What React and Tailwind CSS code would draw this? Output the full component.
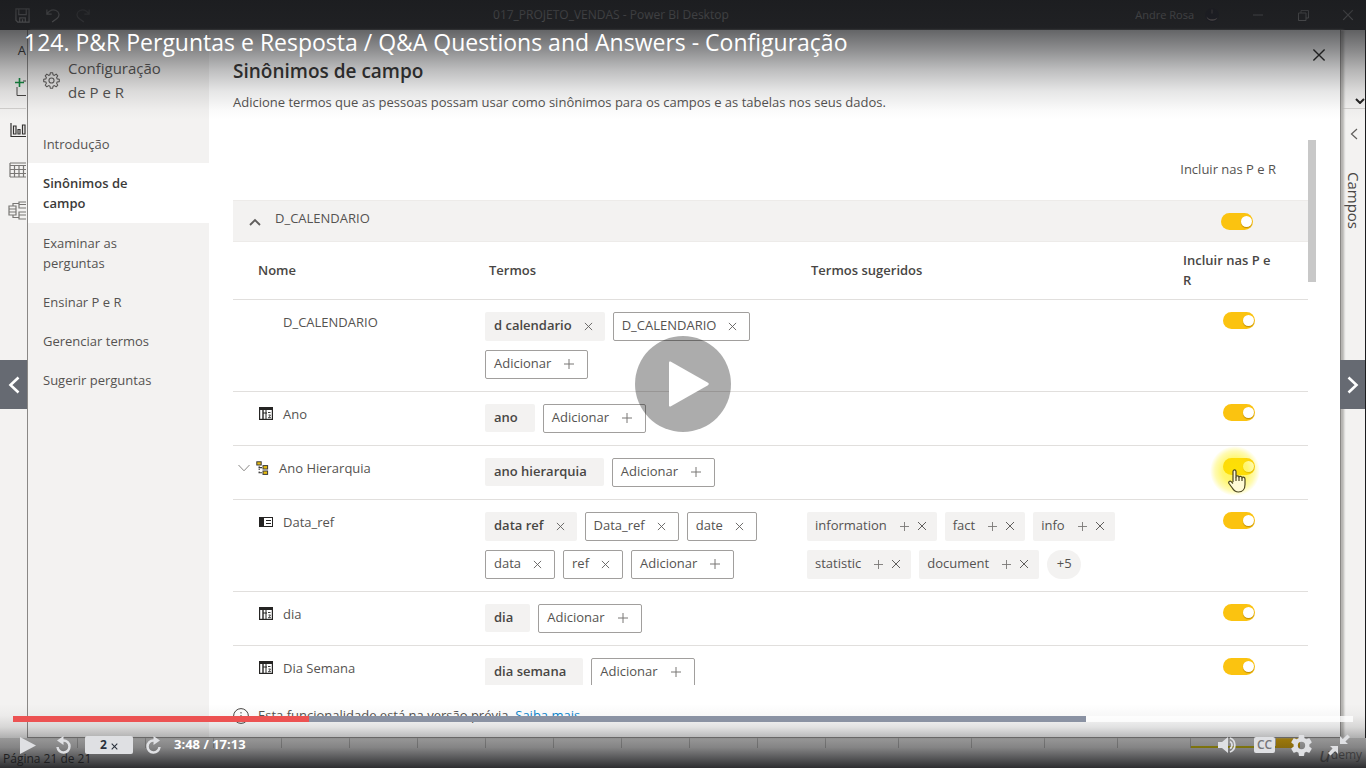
import React, { useState } from "react";

function Cross({ className = "" }) {
  return (
    <svg viewBox="0 0 10 10" className={className} fill="none" stroke="currentColor" strokeWidth="1" aria-hidden="true">
      <path d="M1 1l8 8M9 1l-8 8" />
    </svg>
  );
}

function Plus({ className = "" }) {
  return (
    <svg viewBox="0 0 10 10" className={className} fill="none" stroke="currentColor" strokeWidth="1" aria-hidden="true">
      <path d="M5 0v10M0 5h10" />
    </svg>
  );
}

function GearOutline() {
  return (
    <svg viewBox="0 0 24 24" className="w-[17px] h-[17px] shrink-0" fill="none" stroke="#605e5c" strokeWidth="1.5" strokeLinejoin="round" aria-hidden="true">
      <circle cx="12" cy="12" r="3.6" />
      <path d="M10.4 1h3.2l.6 3 1.8.8L18.600 3l2.300 2.300-1.700 2.600.7 1.800 3.100.6v3.300l-3.100.6-.7 1.800 1.700 2.600-2.300 2.300-2.600-1.700-1.800.8-.6 3h-3.200l-.6-3-1.800-.8L5.400 20.900l-2.300-2.300L4.800 16l-.7-1.800-3.100-.6v-3.300l3.100-.6.7-1.800-1.700-2.600L5.400 3 8 4.800 9.800 4z" />
    </svg>
  );
}

function TableIcon() {
  return (
    <svg viewBox="0 0 14 13" className="w-[14px] h-[13px] shrink-0" fill="none" stroke="#252423" aria-hidden="true">
      <rect x=".6" y=".6" width="12.800" height="11.800" strokeWidth="1.200" />
      <path d="M0 1.500h14" strokeWidth="3" />
      <path d="M4 3v9.500" strokeWidth="1.400" />
      <path d="M7 3v9.500M4 6h4" strokeWidth="1" />
      <path d="M9 5.500h2.500M9.500 8h2l-1 1.300 1 1.400H9" strokeWidth=".9" />
    </svg>
  );
}

function HierarchyIcon() {
  return (
    <svg viewBox="0 0 13 14" className="w-[13px] h-[14px] shrink-0" aria-hidden="true">
      <g fill="#e8bd10" stroke="#3b3a39" strokeWidth="1">
        <rect x=".8" y=".8" width="4.400" height="3.200" />
        <rect x="7" y="4.600" width="4.600" height="3.400" />
        <rect x="7" y="10" width="4.600" height="3.400" />
      </g>
      <path d="M3.200 5.200v1.300M3.200 7.800v1.200M2.500 6.600h3.500M3.200 10.500v1.500M2.500 11.800h3.500" stroke="#3b3a39" strokeWidth="1.100" fill="none" />
    </svg>
  );
}

function FieldIcon() {
  return (
    <svg viewBox="0 0 14 10" className="w-[14px] h-[10px] shrink-0" aria-hidden="true">
      <rect x=".5" y=".5" width="13" height="9" fill="#fff" stroke="#252423" />
      <rect x="0" y="0" width="5" height="10" fill="#252423" />
      <path d="M7 3.500h5M7 6.500h5" stroke="#252423" />
    </svg>
  );
}

function Toggle({ label }) {
  return (
    <input
      type="checkbox"
      defaultChecked
      aria-label={label}
      className="block relative appearance-none w-8 h-[17px] rounded-full bg-[#c8c6c4] checked:bg-[#fbc310] before:absolute before:content-[''] before:w-[11px] before:h-[11px] before:rounded-full before:bg-white before:top-[3px] before:left-[3px] checked:before:left-5 before:shadow-[0_1px_1px_#c08d00]"
    />
  );
}

function Term({ text, kind }) {
  if (kind === "add") {
    return (
      <button type="button" className="flex items-center h-[29px] pl-2 pr-[13px] gap-[13px] border border-[#a19f9d] rounded-[2px] bg-white">
        {text}
        <Plus className="w-[10px] h-[10px] text-[#797775]" />
      </button>
    );
  }
  if (kind === "fixed") {
    return <span className="flex items-center h-[28px] pl-[9px] pr-[17px] rounded-[2px] bg-[#f3f2f1] font-semibold text-[#484644]">{text}</span>;
  }
  const tone =
    kind === "strong"
      ? "flex items-center h-[29px] pl-[9px] pr-3 gap-3 rounded-[2px] bg-[#f3f2f1] font-semibold text-[#484644]"
      : "flex items-center h-[29px] pl-2 pr-3 gap-3 rounded-[2px] border border-[#a19f9d] bg-white";
  return (
    <span className={tone}>
      {text}
      <button type="button" aria-label={"Remover " + text} className="text-[#605e5c]">
        <Cross className="w-[9px] h-[9px]" />
      </button>
    </span>
  );
}

function Suggestion({ text }) {
  return (
    <span className="flex items-center h-[29px] pl-2 pr-[10px] rounded-[2px] bg-[#f3f2f1]">
      {text}
      <button type="button" aria-label={"Adicionar " + text} className="ml-[13px] text-[#797775]">
        <Plus className="w-[9px] h-[9px]" />
      </button>
      <button type="button" aria-label={"Descartar " + text} className="ml-2 text-[#605e5c]">
        <Cross className="w-[10px] h-[10px]" />
      </button>
    </span>
  );
}

const ADD = ["Adicionar", "add"];

const rows = [
  { name: "D_CALENDARIO", icon: null, terms: [["d calendario", "strong"], ["D_CALENDARIO", "user"], ADD], suggestions: [] },
  { name: "Ano", icon: "table", terms: [["ano", "fixed"], ADD], suggestions: [] },
  { name: "Ano Hierarquia", icon: "hierarchy", terms: [["ano hierarquia", "fixed"], ADD], suggestions: [], pointer: true },
  {
    name: "Data_ref",
    icon: "field",
    terms: [["data ref", "strong"], ["Data_ref", "user"], ["date", "user"], ["data", "user"], ["ref", "user"], ADD],
    suggestions: ["information", "fact", "info", "statistic", "document"],
    more: "+5",
  },
  { name: "dia", icon: "table", terms: [["dia", "fixed"], ADD], suggestions: [] },
  { name: "Dia Semana", icon: "table", terms: [["dia semana", "fixed"], ADD], suggestions: [] },
];

function NameCell({ row }) {
  if (row.icon === "hierarchy") {
    return (
      <div className="flex items-center pl-[5px] leading-5">
        <button type="button" aria-label="Expandir Ano Hierarquia" className="text-[#8a8886]">
          <svg viewBox="0 0 12 8" className="w-3 h-2" fill="none" stroke="currentColor" aria-hidden="true">
            <path d="M.5 1L6 6.800 11.500 1" />
          </svg>
        </button>
        <span className="ml-[6px]"><HierarchyIcon /></span>
        <span className="ml-[10px]">{row.name}</span>
      </div>
    );
  }
  return (
    <div className="flex items-center pl-[26px] leading-5">
      <span className="w-6 shrink-0">
        {row.icon === "table" && <TableIcon />}
        {row.icon === "field" && <FieldIcon />}
      </span>
      {row.name}
    </div>
  );
}

function HandPointer() {
  return (
    <div className="absolute left-[27px] top-0 w-[50px] h-[50px] pointer-events-none z-10">
      <div className="absolute inset-0 rounded-full bg-[radial-gradient(circle_closest-side,rgba(255,240,0,0.66)_0%,rgba(255,240,0,0.56)_50%,rgba(255,240,0,0.3)_80%,transparent_100%)]" />
      <svg viewBox="0 0 18 24" className="absolute left-[18px] top-[23px] w-[18px] h-6" fill="#fffbd6" stroke="#4a4520" strokeWidth="1.200" strokeLinejoin="round" aria-hidden="true">
        <path d="M5 13V2.500C5 .4 8 .4 8 2.500V8c0-1.600 3-1.500 3 .3 0-1.400 3-1.200 3 .6 0-1.200 3-1 3 1v5.600c0 4.500-2.500 7.500-6.500 7.500-3.200 0-4.800-1.600-6.200-4L1 14.500c-1-1.800 1-3 2.200-1.800L5 14.500" />
        <path d="M8 8v4M11 8.300V12M14 9v3" fill="none" />
      </svg>
    </div>
  );
}

function TitleBar() {
  return (
    <header className="h-[30px] shrink-0 flex items-center justify-between bg-[#2b2c2e] text-[#c0c0c0] text-[11px] pl-[15px] pr-3">
      <div className="basis-[35.7%] flex items-center gap-4">
        <button type="button" aria-label="Salvar">
          <svg viewBox="0 0 16 16" className="w-[15px] h-[15px]" fill="none" stroke="currentColor" strokeWidth="1.300" aria-hidden="true">
            <path d="M1 1h14v14H3l-2-2zM4 1v6h8V1M5 15v-4.500h6V15M8 12v3" />
          </svg>
        </button>
        <button type="button" aria-label="Desfazer">
          <svg viewBox="0 0 16 16" className="w-[14px] h-[15px]" fill="none" stroke="currentColor" strokeWidth="1.400" aria-hidden="true">
            <path d="M1 1v5.500h5.500M1 6.500C4 2 8 .8 11.500 2.300 15.500 4 16 9 12.500 11.500L7 15.500" />
          </svg>
        </button>
        <button type="button" aria-label="Refazer" className="opacity-40">
          <svg viewBox="0 0 16 16" className="w-[14px] h-[15px]" fill="none" stroke="currentColor" strokeWidth="1.400" aria-hidden="true">
            <path d="M15 1v5.500H9.500M15 6.500C12 2 8 .8 4.500 2.300.5 4 0 9 3.500 11.500L9 15.500" />
          </svg>
        </button>
      </div>
      <div className="text-[12px]">017_PROJETO_VENDAS - Power BI Desktop</div>
      <div className="flex-1 flex items-center justify-end">
        <span>Andre Rosa</span>
        <svg viewBox="0 0 14 14" className="w-[14px] h-[14px] ml-[11px]" aria-hidden="true">
          <circle cx="7" cy="7" r="7" fill="#1d1d2c" />
          <path d="M6 1.500h2v4H6z" fill="#6a6068" />
          <path d="M1.500 8.500c1.200 5.500 9.500 5.500 11 1-2 1.500-3 1.800-5.500 1.800S3 10.500 1.500 8.500z" fill="#cbb8b4" />
        </svg>
        <button type="button" aria-label="Minimizar" className="ml-[34px]">
          <svg viewBox="0 0 10 10" className="w-[10px] h-[10px]" stroke="currentColor" aria-hidden="true"><path d="M0 5h10" /></svg>
        </button>
        <button type="button" aria-label="Restaurar" className="ml-[35px]">
          <svg viewBox="0 0 11 11" className="w-[11px] h-[11px]" fill="none" stroke="currentColor" aria-hidden="true"><path d="M.5 3h7.500v7.500H.5zM3 3V.5h7.500V8H8" /></svg>
        </button>
        <button type="button" aria-label="Fechar janela" className="ml-[33px]"><Cross className="w-3 h-3" /></button>
      </div>
    </header>
  );
}

function LeftRail() {
  return (
    <div className="w-[27px] shrink-0 bg-[#f3f2f1] overflow-hidden flex flex-col items-end pr-px text-[#605e5c]">
      <div className="h-[79px] w-full border-b border-[#d2d0ce] flex flex-col items-end">
        <span className="text-[13px] leading-5 mt-[10px] text-[#323130]">A</span>
        <svg viewBox="0 0 11 18" className="w-[11px] h-[18px] mt-[18px]" fill="none" aria-hidden="true">
          <path d="M2 9v8.500h9M8 3h3" stroke="#484644" />
          <path d="M4.500 0v9M0 4.500h9" stroke="#10893e" strokeWidth="1.600" />
        </svg>
      </div>
      <svg viewBox="0 0 16 16" className="w-4 h-4 mt-[13px]" fill="none" stroke="#323130" strokeWidth="1.200" aria-label="Relatório">
        <path d="M1 1v13.500h15M3.500 12V4h2.500v8zM8 12V7.500h2V12zM12.500 12V3H15v9z" />
      </svg>
      <svg viewBox="0 0 17 16" className="w-[17px] h-4 mt-6" fill="none" stroke="#797775" strokeWidth="1.200" aria-label="Dados">
        <path d="M1 1h16M1 3.500h16M1 7.500h16M1 11.500h16M1 15h16M1 1v14M5.500 3.500V15M10 3.500V15M14.500 3.500V15" />
      </svg>
      <svg viewBox="0 0 18 19" className="w-[18px] h-[19px] mt-[23px]" fill="none" stroke="#797775" strokeWidth="1.200" aria-label="Modelo">
        <path d="M1 5h7v9H1zM1 8h7M1 11h7M5 5V2.500h6M5 14v2.500h6M18 1h-7v6h7M11 3.500h7M18 11h-7v7h7M11 14h7" />
      </svg>
    </div>
  );
}

function RightRail() {
  return (
    <div className="w-[25px] shrink-0 bg-[#f3f2f1] border-r border-[#1c1d1f] overflow-hidden flex flex-col items-end">
      <div className="h-[79px] w-full border-b border-[#d2d0ce] flex items-end justify-end pb-1">
        <svg viewBox="0 0 10 6" className="w-[10px] h-[6px]" fill="none" stroke="#252423" strokeWidth="2" aria-hidden="true"><path d="M1 1l4 4 4-4" /></svg>
      </div>
      <svg viewBox="0 0 8 12" className="w-2 h-3 mt-[19px] mr-[7px]" fill="none" stroke="#605e5c" strokeWidth="1.200" aria-hidden="true"><path d="M7 1L1.500 6 7 11" /></svg>
      <div className="[writing-mode:vertical-rl] text-[15px] leading-5 mt-8 mr-px font-medium text-[#484644]">Campos</div>
    </div>
  );
}

const navItems = ["Introdução", "Sinônimos de campo", "Examinar as perguntas", "Ensinar P e R", "Gerenciar termos", "Sugerir perguntas"];

function Sidebar() {
  const [active, setActive] = useState("Sinônimos de campo");
  return (
    <aside className="w-[181px] shrink-0 bg-[#f3f2f1] text-[#555351]">
      <div className="flex items-center gap-2 pl-[15px] pt-[26px] text-[15px] leading-6">
        <GearOutline />
        <div className="w-[110px]">Configuração de P e R</div>
      </div>
      <nav className="mt-5 text-[13px] leading-5">
        {navItems.map((item) => (
          <button
            key={item}
            type="button"
            onClick={() => setActive(item)}
            className={
              item === active
                ? "block w-full text-left pl-[15px] pr-12 py-[10px] bg-white font-semibold text-[#3b3a39]"
                : "block w-full text-left pl-[15px] pr-12 pt-[10px] pb-[9px]"
            }
          >
            {item}
          </button>
        ))}
      </nav>
    </aside>
  );
}

function SynonymTable() {
  return (
    <table className="w-full table-fixed border-collapse text-left">
      <colgroup>
        <col className="w-[252px]" />
        <col className="w-[322px]" />
        <col />
        <col className="w-[125px]" />
      </colgroup>
      <thead>
        <tr className="h-[57px] border-b border-[#e1dfdd] leading-5 text-[#484644]">
          <th className="font-semibold pl-[25px]">Nome</th>
          <th className="font-semibold pl-1">Termos</th>
          <th className="font-semibold pl-1">Termos sugeridos</th>
          <th className="font-semibold pr-7">Incluir nas P e R</th>
        </tr>
      </thead>
      <tbody>
        {rows.map((row) => (
          <tr key={row.name} className="border-b border-[#e1dfdd] align-top">
            <td className="pt-3"><NameCell row={row} /></td>
            <td className="pt-3 pb-3">
              <div className="flex flex-wrap gap-x-2 gap-y-[9px]">
                {row.terms.map(([text, kind]) => <Term key={text} text={text} kind={kind} />)}
              </div>
            </td>
            <td className="pt-3 pb-3">
              <div className="flex flex-wrap gap-x-2 gap-y-[9px]">
                {row.suggestions.map((s) => <Suggestion key={s} text={s} />)}
                {row.more && <button type="button" className="h-[29px] w-[34px] rounded-full bg-[#f3f2f1]">{row.more}</button>}
              </div>
            </td>
            <td className="pt-3 pl-10 relative">
              <Toggle label={"Incluir " + row.name} />
              {row.pointer && <HandPointer />}
            </td>
          </tr>
        ))}
      </tbody>
    </table>
  );
}

function SynonymsPanel() {
  return (
    <main className="flex-1 min-w-0 flex flex-col bg-white pl-6 text-[13px] text-[#555351]">
      <div className="flex justify-between">
        <h1 className="pt-[27px] text-[19px] leading-7 font-semibold text-[#323130]">Sinônimos de campo</h1>
        <button type="button" aria-label="Fechar" className="mt-[18px] mr-[14px] self-start text-[#252423]"><Cross className="w-[14px] h-[14px]" /></button>
      </div>
      <p className="mt-[7px] leading-5">Adicione termos que as pessoas possam usar como sinônimos para os campos e as tabelas nos seus dados.</p>
      <div className="mt-7 flex-1 min-h-0 flex overflow-hidden pr-6">
        <div className="flex-1 min-w-0">
          <div className="h-[60px] flex items-center justify-end pr-8">Incluir nas P e R</div>
          <div className="h-[42px] flex items-center bg-[#f3f2f1] border-y border-[#edebe9] pl-4 pr-[55px]">
            <button type="button" className="flex items-center gap-[14px]">
              <svg viewBox="0 0 12 8" className="w-3 h-2 mt-px" fill="none" stroke="#605e5c" strokeWidth="1.800" aria-hidden="true"><path d="M1 7l5-5 5 5" /></svg>
              <span className="pb-1">D_CALENDARIO</span>
            </button>
            <span className="ml-auto"><Toggle label="Incluir tabela D_CALENDARIO" /></span>
          </div>
          <SynonymTable />
        </div>
        <div className="w-2 h-[142px] bg-[#c8c8c8] shrink-0" />
      </div>
      <div className="h-[52px] shrink-0 flex items-center gap-[9px] pt-[10px]">
        <svg viewBox="0 0 16 16" className="w-4 h-4" fill="none" stroke="#484644" aria-hidden="true"><circle cx="8" cy="8" r="7.400" /><path d="M8 4v1.500M8 7v5" /></svg>
        <span>Esta funcionalidade está na versão prévia. <a href="#saiba-mais" className="text-[#0f87cf]">Saiba mais</a></span>
      </div>
    </main>
  );
}

const earlierPages = Array.from({ length: 11 }, (_, i) => i);
const laterPages = Array.from({ length: 5 }, (_, i) => i);

function PageStrip() {
  return (
    <footer className="h-[30px] shrink-0 bg-[#d0cfce] overflow-hidden">
      <div className="h-[10px] flex pr-[66px]">
        <div className="flex-1 border-r border-[#a3a2a1]" />
        {earlierPages.map((t) => <div key={t} className="w-[68px] shrink-0 border-r border-[#a3a2a1]" />)}
        {laterPages.map((t) => <div key={t} className="w-[73px] shrink-0 border-r border-[#a3a2a1]" />)}
        <div className="w-[85px] shrink-0 border-b-2 border-[#c2b000]" />
        <div className="w-6 shrink-0 bg-[#d9a400]" />
      </div>
      <div className="pt-[2px] pl-[3px] text-[12px] leading-[18px] flex justify-between pr-1 text-[#252423]">
        <span>Página 21 de 21</span>
        <span className="flex items-center -mt-2 text-[#6b6967]"><i className="text-[20px] leading-[18px]">u</i>demy</span>
      </div>
    </footer>
  );
}

function ReplayIcon({ flip }) {
  return (
    <svg viewBox="0 0 18 18" className={flip ? "w-[18px] h-[18px] -scale-x-100" : "w-[18px] h-[18px]"} fill="none" aria-hidden="true">
      <path d="M8 4.500h1.500a6 6 0 1 1-6 6.500" stroke="currentColor" strokeWidth="2.500" />
      <path d="M9.500 0v9L3 4.500z" fill="currentColor" />
    </svg>
  );
}

function PlayerControls() {
  return (
    <div className="absolute inset-x-0 bottom-0 text-[#dfe0e3]">
      <div className="relative mx-[13px] h-[6px] bg-white/80">
        <div className="absolute inset-y-0 left-0 w-[80.100%] bg-[#8a92a3]" />
        <div className="absolute inset-y-0 left-0 w-[22.100%] bg-[#ec5252]" />
        <input type="range" min="0" max="1033" defaultValue="228" aria-label="Posição do vídeo" className="absolute inset-0 w-full h-full m-0 opacity-0 cursor-pointer" />
      </div>
      <div className="h-[46px] flex items-center pl-5 pr-4">
        <button type="button" aria-label="Reproduzir">
          <svg viewBox="0 0 16 17" className="w-4 h-[17px]" fill="currentColor" aria-hidden="true"><path d="M0 0l16 8.500L0 17z" /></svg>
        </button>
        <button type="button" aria-label="Voltar" className="ml-[18px]"><ReplayIcon /></button>
        <button type="button" aria-label="Velocidade de reprodução" className="ml-[13px] w-12 h-[18px] rounded-[2px] bg-[#dfe0e3] text-[#29303b] text-[12px] leading-[18px] font-bold flex items-center justify-center gap-1">
          2<Cross className="w-[7px] h-[7px] mt-[3px] stroke-[1.5]" />
        </button>
        <button type="button" aria-label="Avançar" className="ml-3"><ReplayIcon flip /></button>
        <span className="ml-[11px] text-[13px] font-bold text-white">3:48 / 17:13</span>
        <div className="ml-auto flex items-center">
          <button type="button" aria-label="Volume">
            <svg viewBox="0 0 19 16" className="w-[19px] h-4" fill="currentColor" aria-hidden="true">
              <path d="M0 5h4l6-5v16l-6-5H0z" />
              <path d="M12 4.500a4 4 0 0 1 0 7M12 1a7.500 7.500 0 0 1 0 14" fill="none" stroke="currentColor" strokeWidth="1.800" />
            </svg>
          </button>
          <button type="button" aria-label="Legendas" className="ml-[17px] w-[21px] h-4 rounded-[2px] bg-[#dfe0e3] text-[#77777a] text-[12px] leading-4 font-semibold">CC</button>
          <button type="button" aria-label="Configurações" className="ml-4">
            <svg viewBox="2 2 20 20" className="w-[21px] h-[21px]" fill="currentColor" aria-hidden="true">
              <path d="M19.430 12.980c.04-.32.070-.64.070-.98s-.03-.66-.07-.98l2.110-1.650c.19-.15.240-.42.120-.64l-2-3.460c-.12-.22-.39-.3-.61-.22l-2.490 1c-.52-.4-1.080-.73-1.690-.98l-.38-2.650C14.460 2.180 14.250 2 14 2h-4c-.25 0-.46.180-.49.420l-.38 2.650c-.61.250-1.170.590-1.690.98l-2.490-1c-.23-.09-.49 0-.61.220l-2 3.460c-.13.220-.07.490.120.640l2.110 1.650c-.04.320-.07.650-.07.980s.030.660.070.980l-2.110 1.650c-.19.150-.24.420-.12.640l2 3.460c.12.220.39.300.61.220l2.490-1c.52.400 1.080.730 1.690.980l.38 2.650c.03.240.24.420.49.420h4c.25 0 .46-.18.490-.42l.38-2.650c.61-.25 1.170-.59 1.690-.98l2.490 1c.23.090.49 0 .61-.22l2-3.460c.12-.22.070-.49-.12-.64zM12 15.500A3.500 3.500 0 1 1 12 8.500a3.500 3.500 0 0 1 0 7z" />
            </svg>
          </button>
          <button type="button" aria-label="Sair da tela cheia" className="ml-4">
            <svg viewBox="0 0 22 22" className="w-[22px] h-[22px]" fill="currentColor" aria-hidden="true">
              <path d="M12 2v8h8l-2.600-2.600L22 3 19.500.500 14.800 5z" />
              <path d="M10 20v-8H2l2.600 2.600L0 19l2.500 2.500L7.200 17z" />
            </svg>
          </button>
        </div>
      </div>
    </div>
  );
}

function PlayerOverlay() {
  return (
    <>
      <div className="absolute inset-x-0 top-0 h-[120px] pointer-events-none bg-[linear-gradient(to_bottom,rgba(27,28,31,0.9)_0%,rgba(27,28,31,0.66)_27%,rgba(27,28,31,0.49)_42%,rgba(27,28,31,0.29)_58%,rgba(27,28,31,0.11)_76%,rgba(27,28,31,0.02)_92%,transparent_100%)]" />
      <div className="absolute inset-x-0 bottom-0 h-[64px] pointer-events-none bg-[linear-gradient(to_bottom,transparent_0%,rgba(27,28,31,0.03)_18%,rgba(27,28,31,0.13)_36%,rgba(27,28,31,0.3)_52%,rgba(27,28,31,0.42)_68%,rgba(27,28,31,0.9)_100%)]" />
      <h2 className="absolute left-6 top-[26px] text-[23px] leading-8 text-white">124. P&amp;R Perguntas e Resposta / Q&amp;A Questions and Answers - Configuração</h2>
      <button type="button" aria-label="Aula anterior" className="absolute left-0 top-[360px] w-[27px] h-[49px] bg-[#666a72] flex items-center justify-center">
        <svg viewBox="0 0 12 18" className="w-3 h-[18px]" fill="none" stroke="#fff" strokeWidth="2.600" aria-hidden="true"><path d="M10.500 1.500L2.500 9l8 7.500" /></svg>
      </button>
      <button type="button" aria-label="Próxima aula" className="absolute right-px top-[360px] w-[25px] h-[49px] bg-[#666a72] flex items-center justify-center">
        <svg viewBox="0 0 12 18" className="w-3 h-[18px]" fill="none" stroke="#fff" strokeWidth="2.600" aria-hidden="true"><path d="M1.500 1.500l8 7.500-8 7.500" /></svg>
      </button>
      <div className="absolute inset-0 flex items-center justify-center pointer-events-none">
        <button type="button" aria-label="Reproduzir vídeo" className="w-24 h-24 rounded-full bg-black/[0.325] flex items-center justify-center pointer-events-auto">
          <svg viewBox="0 0 40 46" className="w-10 h-[46px] ml-3" fill="#fff" aria-hidden="true"><path d="M0 1.500Q0 0 1.500.6L39 21.800Q40.500 23 39 24.200L1.500 45.400Q0 46 0 44.500z" /></svg>
        </button>
      </div>
      <PlayerControls />
    </>
  );
}

export default function App() {
  return (
    <div className="relative h-screen overflow-hidden flex flex-col bg-[#f3f2f1] font-['Open_Sans','Noto_Sans',sans-serif]">
      <TitleBar />
      <div className="flex-1 min-h-0 flex">
        <LeftRail />
        <div role="dialog" aria-label="Configuração de P e R" className="relative flex-1 min-w-0 flex border-l border-b border-r border-[#8a8886] shadow-[3px_0_2px_#b5b3b1] z-0">
          <Sidebar />
          <SynonymsPanel />
        </div>
        <RightRail />
      </div>
      <PageStrip />
      <PlayerOverlay />
    </div>
  );
}
